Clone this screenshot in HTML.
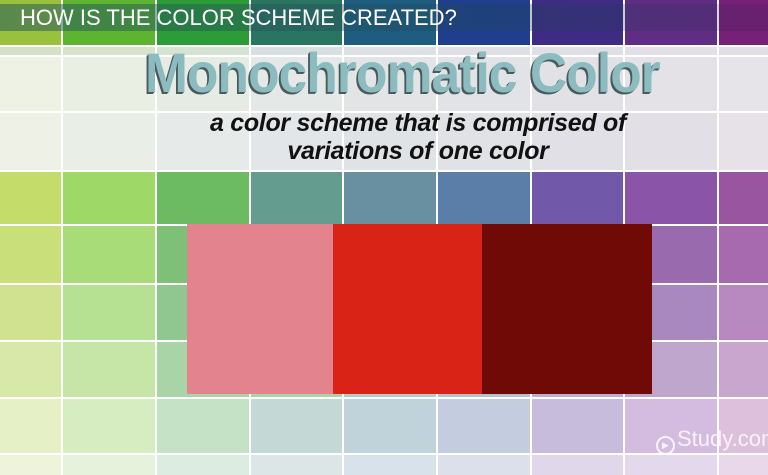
<!DOCTYPE html>
<html><head><style>
body{margin:0;width:768px;height:475px;overflow:hidden;background:#fff;font-family:"Liberation Sans",sans-serif;position:relative}
.c{position:absolute}
</style></head><body>
<div id="g"></div>
<script>
var xs=[0,61,155,249,342,436,530,623,717,768];
var ys=[0,45,55,111,170,224,283,340,397,453,475];
var rows=[
["#98c23c","#5cb431","#2c9c36","#2a7462","#1e5c80","#1f3f8c","#3e2c84","#602d84","#762078"],
["#d6e0c8","#d8e2cc","#d6e2d4","#d8dfe0","#dde1e4","#dfe0e6","#e0dfe6","#e2dfe6","#e2dfe4"],
["#edf2e4","#eaefe4","#e6ebe4","#e4e8e6","#e2e4e6","#e2e3e6","#e2e2e6","#e4e2e6","#e6e4e8"],
["#eef2e6","#e9eee6","#e6eae8","#e2e6e8","#e0e3e6","#e0e2e6","#e0e0e6","#e2e0e6","#e6e2e8"],
["#c4dc6a","#9ed867","#6cbb62","#659c90","#6890a0","#5b7ea8","#7158a8","#8a55a8","#9a55a0"],
["#c9df7a","#a8dc78","#7fc078","#7fc078","#7fb0a8","#7fa0b0","#8a7ab5","#9a6aaf","#a86aaf"],
["#d0e290","#b6e092","#90c690","#90c690","#98c0b8","#9ab0c0","#a496c4","#a888bf","#b888c0"],
["#d8e8a8","#c6e6a8","#a8d4a8","#a8d4a8","#b0cec8","#b0c4d0","#b8b0d2","#bea6cc","#c8a6ce"],
["#e6f0c6","#d6edc2","#c6e2c6","#c4d8d6","#c0d2da","#c4cce0","#c8bcdc","#d4bce0","#dcc0dc"],
["#eef4dc","#e6f2dc","#dcece0","#dce6e6","#d8e2ea","#dce0ea","#e0d8ea","#e4d8ec","#e8d8ea"]];
var h="";
for(var r=0;r<rows.length;r++)for(var c=0;c<9;c++){
var x=xs[c]+(c?2:0),y=ys[r]+(r?2:0);
h+='<div class="c" style="left:'+x+'px;top:'+y+'px;width:'+(xs[c+1]-x)+'px;height:'+(ys[r+1]-y)+'px;background:'+rows[r][c]+'"></div>';}
document.getElementById('g').innerHTML=h;
</script>
<div class="c" style="left:0;top:4px;width:768px;height:27px;background:linear-gradient(90deg,rgba(40,90,90,.55),rgba(30,70,90,.35) 60%,rgba(30,30,60,.15))"></div>
<div class="c" style="left:20px;top:5px;color:#fff;font-size:22px;letter-spacing:0px;white-space:nowrap">HOW IS THE COLOR SCHEME CREATED?</div>
<div class="c" style="left:145px;top:40px;white-space:nowrap;font-size:56px;font-weight:bold;color:#8cbcc0;text-shadow:-2px 2px 0 #4a5a5c,-1px 1px 0 #4a5a5c;transform:scaleX(.92);transform-origin:0 0;letter-spacing:-1px">Monochromatic Color</div>
<div class="c" style="left:0;width:836px;top:109px;text-align:center;font-size:25px;font-weight:bold;font-style:italic;color:#111;line-height:28px;letter-spacing:-0.3px">a color scheme that is comprised of<br>variations of one color</div>
<div class="c" style="left:187px;top:224px;width:146px;height:170px;background:#e3838e"></div>
<div class="c" style="left:333px;top:224px;width:149px;height:170px;background:#d92316"></div>
<div class="c" style="left:482px;top:224px;width:170px;height:170px;background:#700a06"></div>
<div class="c" style="left:656px;top:426px;color:rgba(255,255,255,.8);font-size:22px;white-space:nowrap"><span style="display:inline-block;width:15px;height:15px;border:2px solid rgba(255,255,255,.8);border-radius:50%;vertical-align:-2px;margin-right:2px;font-size:9px;text-align:center;line-height:15px">▶</span>Study.com</div>
</body></html>
